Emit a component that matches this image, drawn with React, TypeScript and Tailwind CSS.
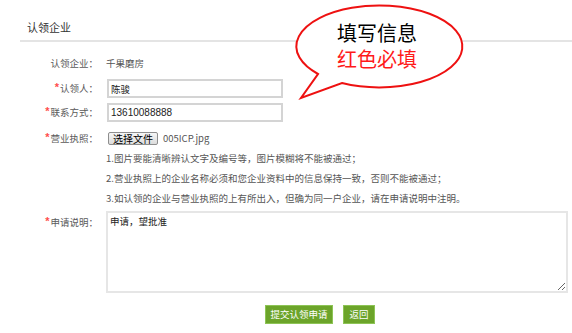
import React from 'react';

const font = { fontFamily: '"Noto Sans CJK SC", "Liberation Sans", sans-serif' };

const Label: React.FC<{ text: string; required?: boolean }> = ({ text, required }) => (
  <div className="w-[100px] shrink-0 text-right text-[#5a5a5a] pr-[2px]">
    {required && (
      <span className="text-[#ff4d4d] text-[11px] font-bold relative top-[-1px] mr-[1px]" style={{ fontFamily: '"Liberation Sans", sans-serif' }}>
        *
      </span>
    )}
    {text}：
  </div>
);

const App: React.FC = () => {
  return (
    <div className="relative w-[572px] h-[333px] bg-white overflow-hidden text-[9.5px] text-[#333]" style={font}>
      <div className="ml-[20px] pl-[7px] pt-[19px] h-[42px] border-b-2 border-[#e4e4e4] text-[11px] leading-[16px] text-[#333]">
        认领企业
      </div>

      <div className="mt-[11px]">
        <div className="flex items-center h-[20px]">
          <Label text="认领企业" />
          <span className="ml-[6px] text-[#555]">千果磨房</span>
        </div>

        <div className="flex items-center h-[19px] mt-[6px]">
          <Label text="认领人" required />
          <input
            defaultValue="陈骏"
            className="ml-[7px] w-[176px] h-[19px] border-2 border-[#d4d4d4] px-[2px] text-[9.5px] text-[#222] outline-none"
            style={font}
          />
        </div>

        <div className="flex items-center h-[19px] mt-[5px]">
          <Label text="联系方式" required />
          <input
            defaultValue="13610088888"
            className="ml-[7px] w-[176px] h-[19px] border-2 border-[#d4d4d4] px-[2px] text-[10px] text-[#222] outline-none"
            style={{ fontFamily: '"Liberation Sans", sans-serif' }}
          />
        </div>

        <div className="flex items-center h-[20px] mt-[6px]">
          <Label text="营业执照" required />
          <button className="ml-[8px] h-[13px] px-[4px] border border-[#8e8e8e] rounded-[2px] bg-gradient-to-b from-[#f6f6f6] to-[#dcdcdc] text-[10px] leading-[11px] text-black">
            选择文件
          </button>
          <span className="ml-[5px] text-[#555]">005ICP.jpg</span>
        </div>

        <div className="ml-[106px] leading-[20px] text-[#555]">
          <div>1.图片要能清晰辨认文字及编号等，图片模糊将不能被通过；</div>
          <div>2.营业执照上的企业名称必须和您企业资料中的信息保持一致，否则不能被通过；</div>
          <div>3.如认领的企业与营业执照的上有所出入，但确为同一户企业，请在申请说明中注明。</div>
        </div>

        <div className="flex items-start mt-[3px]">
          <div className="pt-[3px]">
            <Label text="申请说明" required />
          </div>
          <textarea
            defaultValue="申请，望批准"
            className="ml-[6px] w-[462px] h-[82px] border-2 border-[#e6e6e6] px-[2px] py-[1px] text-[9.5px] text-[#222] outline-none"
            style={font}
          />
        </div>

        <div className="flex gap-[10px] ml-[265px] mt-[12px]">
          <button className="h-[19px] w-[68px] bg-[#6ca42a] border border-[#8dc455] text-white text-[9.5px]">
            提交认领申请
          </button>
          <button className="h-[19px] w-[32px] bg-[#6ca42a] border border-[#8dc455] text-white text-[9.5px]">
            返回
          </button>
        </div>
      </div>

      <div className="absolute left-[290px] top-0 w-[180px] h-[105px]">
        <svg width="180" height="105" viewBox="0 0 180 105" className="absolute inset-0">
          <path
            d="M 28 74 A 83 41 0 1 1 52 83 L 11 98 Z"
            fill="white"
            stroke="#ee1111"
            strokeWidth="2"
            strokeLinejoin="miter"
          />
        </svg>
        <div className="absolute left-[47px] top-[20px] text-[20px] leading-[26px]">
          <div className="text-black">填写信息</div>
          <div className="text-[#ff1a1a]">红色必填</div>
        </div>
      </div>
    </div>
  );
};

export default App;
